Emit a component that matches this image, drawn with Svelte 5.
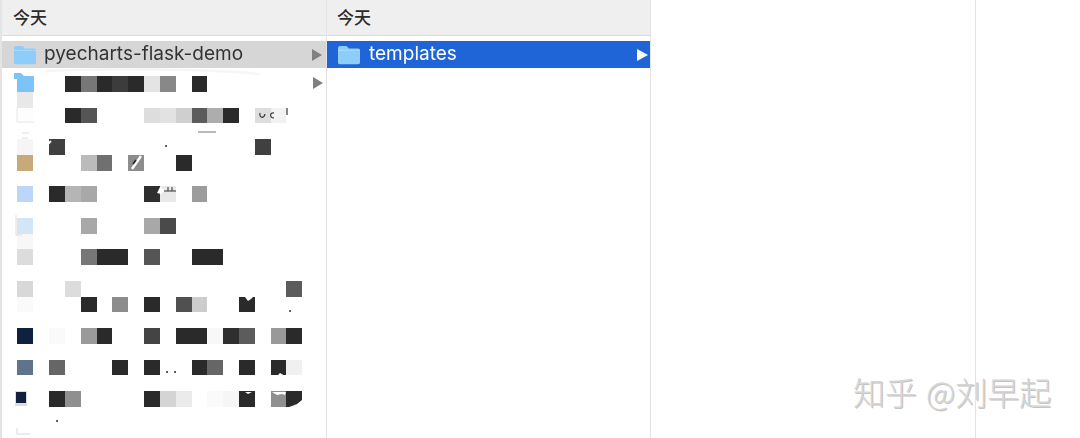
<script>
  // mosaic cells left over from the censored file list: [row, col, colour]
  const d = "#2a2a2a";
  const cells = [
    [0, 3, d], [0, 4, "#777"], [0, 5, d], [0, 6, "#3c3c3c"], [0, 7, d], [0, 8, "#e4e4e4"], [0, 9, "#888"], [0, 11, d],
    [1, 0, "#e8e8e8"],
    [2, 0, "#fdfdfd"], [2, 3, d], [2, 4, "#555"], [2, 8, "#ddd"], [2, 9, "#e2e2e2"], [2, 10, "#cfcfcf"], [2, 11, "#5c5c5c"], [2, 12, "#adadad"], [2, 13, d], [2, 15, "#ddd"], [2, 16, "#f2f2f2"],
    [4, 0, "#f5f5f5"], [4, 2, "#404040"], [4, 15, "#404040"],
    [5, 0, "#c8a97a"], [5, 4, "#bbb"], [5, 5, "#707070"], [5, 7, "#8c8c8c"], [5, 10, d],
    [7, 0, "#bcd6fb"], [7, 2, d], [7, 3, "#b5b5b5"], [7, 4, "#a8a8a8"], [7, 8, "#2e2e2e"], [7, 9, "#e8e8e8"], [7, 11, "#9c9c9c"],
    [9, 0, "#d3e6f8"], [9, 4, "#a8a8a8"], [9, 8, "#a8a8a8"], [9, 9, "#4a4a4a"],
    [10, 0, "#f7f7f7"],
    [11, 0, "#dcdcdc"], [11, 4, "#777"], [11, 5, d], [11, 6, d], [11, 8, "#555"], [11, 11, d], [11, 12, d],
    [13, 0, "#d8d8d8"], [13, 3, "#dcdcdc"], [13, 17, "#5c5c5c"],
    [14, 0, "#fafafa"], [14, 4, d], [14, 6, "#8c8c8c"], [14, 8, d], [14, 10, "#505050"], [14, 11, "#ccc"], [14, 14, d],
    [16, 0, "#10213f"], [16, 2, "#fafafa"], [16, 4, "#9a9a9a"], [16, 5, d], [16, 8, "#444"], [16, 10, d], [16, 11, d], [16, 12, "#f8f8f8"], [16, 13, "#2f2f2f"], [16, 14, "#5c5c5c"], [16, 16, "#999"], [16, 17, d],
    [18, 0, "#5f748a"], [18, 2, "#666"], [18, 6, d], [18, 8, d], [18, 11, d], [18, 12, "#666"], [18, 14, d], [18, 16, d], [18, 17, "#f0f0f0"],
    [20, 2, d], [20, 3, "#8f8f8f"], [20, 8, d], [20, 9, "#d4d4d4"], [20, 10, "#ebebeb"], [20, 12, "#fafafa"], [20, 13, "#f6f6f6"], [20, 14, d], [20, 16, "#909090"], [20, 17, d]
  ];
</script>

{#snippet folder()}
  <svg class="folder" width="24" height="20" viewBox="0 0 24 20">
    <path d="M1 3.2C1 1.9 1.8 1 3 1h5.600c.8 0 1.300.3 1.900.9L12 3.400h9c1.200 0 2 .8 2 2V17.500c0 1-.8 1.700-1.800 1.700H2.800C1.800 19.200 1 18.500 1 17.500z" fill="#8ccdf9" />
    <path d="M1 5.400h22" stroke="#a9dafb" stroke-width="1" />
  </svg>
{/snippet}

<div class="finder">
  <section class="col first">
    <header>今天</header>
    <div class="row current">
      {@render folder()}
      <span class="name">pyecharts-flask-demo</span>
      <i class="arrow"></i>
    </div>
    <div class="mosaic">
      <svg class="tab" width="20" height="20" viewBox="0 0 20 20" style="grid-row: 1 / span 2; grid-column: 1">
        <path d="M0 1h7l3 3h10v16H3V7H0z" fill="#7cc4f8" />
      </svg>
      <i class="arrow gray" style="grid-row: 1; grid-column: 19 / span 2"></i>
      {#each cells as [r, c, colour]}
        <b style="grid-row: {r + 1}; grid-column: {c + 1}; background: {colour}"></b>
      {/each}
      <span class="screen" style="grid-row: 21; grid-column: 1"></span>
    </div>
  </section>

  <section class="col second">
    <header>今天</header>
    <div class="row selected">
      {@render folder()}
      <span class="name">templates</span>
      <i class="arrow white"></i>
    </div>
  </section>

  <section class="col"></section>
  <section class="rest"></section>

  <!-- blur artefacts of the censoring, sitting over the list -->
  <svg class="artefacts" width="327" height="438" viewBox="0 0 327 438">
    <path d="M45 71c60-3 170-2 215 3" stroke="#f6f6f6" stroke-width="2.500" fill="none" />
    <path d="M17 107v15h17" stroke="#e6e6e6" stroke-width="1" fill="none" />
    <path d="M16 215v20h6" stroke="#e6dcd2" stroke-width="1" fill="none" />
    <path d="M17 428v6h13" stroke="#d8d8d8" stroke-width="1" fill="none" />
    <path d="M141 156l-9 13" stroke="#fff" stroke-width="2.500" />
    <path d="M136 160l-3 4" stroke="#222" stroke-width="1.500" />
    <path d="M48 144l3-3" stroke="#fff" stroke-width="2" />
    <path d="M157 193l3-6 5 3-4 4z" fill="#fff" />
    <path d="M164 191h12M168 187v4M172 187v4" stroke="#333" stroke-width="1" />
    <path d="M260 113c-1 5 4 6 5 1M274 113c-4-1-5 5 0 5M287 108v7" stroke="#333" stroke-width="1.200" fill="none" />
    <path d="M245 297l3 4 3-2 2-2zM245 392l3 2 4-2zM272 392l5 3 5-1 3 1 1-3zM277 376l3-3 5 3z" fill="#fff" />
    <path d="M286 408l6-2 5-2 5-4v8z" fill="#fff" />
    <path d="M166 146h.1M167 372h.1M175 372h.1M57 421h.1M290 311h.1" stroke="#222" stroke-width="1.800" stroke-linecap="round" />
    <path d="M22 133h7M22 138h6" stroke="#e0e0e0" stroke-width="1" />
    <path d="M198 132h18" stroke="#777" stroke-width="1" />
  </svg>

  <div class="watermark">知乎 @刘早起</div>
</div>

<style>
  :global(body) {
    background: #fff;
  }
  .finder {
    position: relative;
    display: flex;
    width: 1080px;
    height: 438px;
    overflow: hidden;
    background: #fff;
    font-family: Inter, "Liberation Sans", "Noto Sans CJK SC", sans-serif;
  }
  .col {
    width: 325px;
    flex: none;
    box-sizing: border-box;
    border-right: 1px solid #e3e3e3;
  }
  .col.first {
    width: 327px;
    border-left: 2px solid #e4e4e4;
  }
  .col.second {
    width: 324px;
  }
  .rest {
    flex: 1;
  }
  header {
    height: 36px;
    box-sizing: border-box;
    padding: 5px 0 0 11px;
    background: #efefef;
    border-bottom: 1px solid #dcdcdc;
    margin-bottom: 5px;
    color: #2b2b2b;
    font: 500 17px/24px "Noto Sans CJK SC", sans-serif;
  }
  .second header {
    padding-left: 10px;
  }
  .row {
    display: flex;
    align-items: center;
    height: 27px;
    box-sizing: border-box;
    padding-left: 11px;
    font-size: 19px;
  }
  .second .row {
    padding-left: 10px;
  }
  .second .folder {
    margin-right: 8px;
  }
  .current {
    background: #d6d6d6;
    color: #333;
  }
  .selected {
    background: #2065d8;
    color: #fff;
  }
  .folder {
    margin-right: 7px;
    flex: none;
  }
  .name {
    filter: blur(0.3px);
    position: relative;
    top: -1px;
  }
  .arrow {
    display: block;
    margin-left: auto;
    margin-right: 4px;
    width: 0;
    height: 0;
    border-left: 10px solid #808080;
    border-top: 6px solid transparent;
    border-bottom: 6px solid transparent;
  }
  .arrow.gray {
    margin: 1px 0 0 11px;
  }
  .arrow.white {
    border-left-color: #fff;
    border-left-width: 11px;
    margin-right: 2px;
  }
  .mosaic {
    display: grid;
    grid-template-columns: repeat(20, 15.83px);
    grid-auto-rows: 15.76px;
    margin: 8px 0 0 15.4px;
  }
  .mosaic b {
    display: block;
  }
  .tab {
    margin: -4px 0 0 -3px;
    z-index: 1;
  }
  .screen {
    width: 10px;
    height: 11px;
    margin: 0 0 0 -2px;
    background: #10213f;
    border: 1px solid #ddd;
    border-bottom-width: 3px;
  }
  .artefacts {
    position: absolute;
    left: 0;
    top: 0;
  }
  .watermark {
    position: absolute;
    left: 853px;
    top: 369px;
    color: #d6d6d6;
    font: 300 32px/44px "Noto Sans CJK SC", sans-serif;
    word-spacing: 2px;
    text-shadow: 1px 1px 0 #c4c4c4;
    white-space: nowrap;
  }
</style>
